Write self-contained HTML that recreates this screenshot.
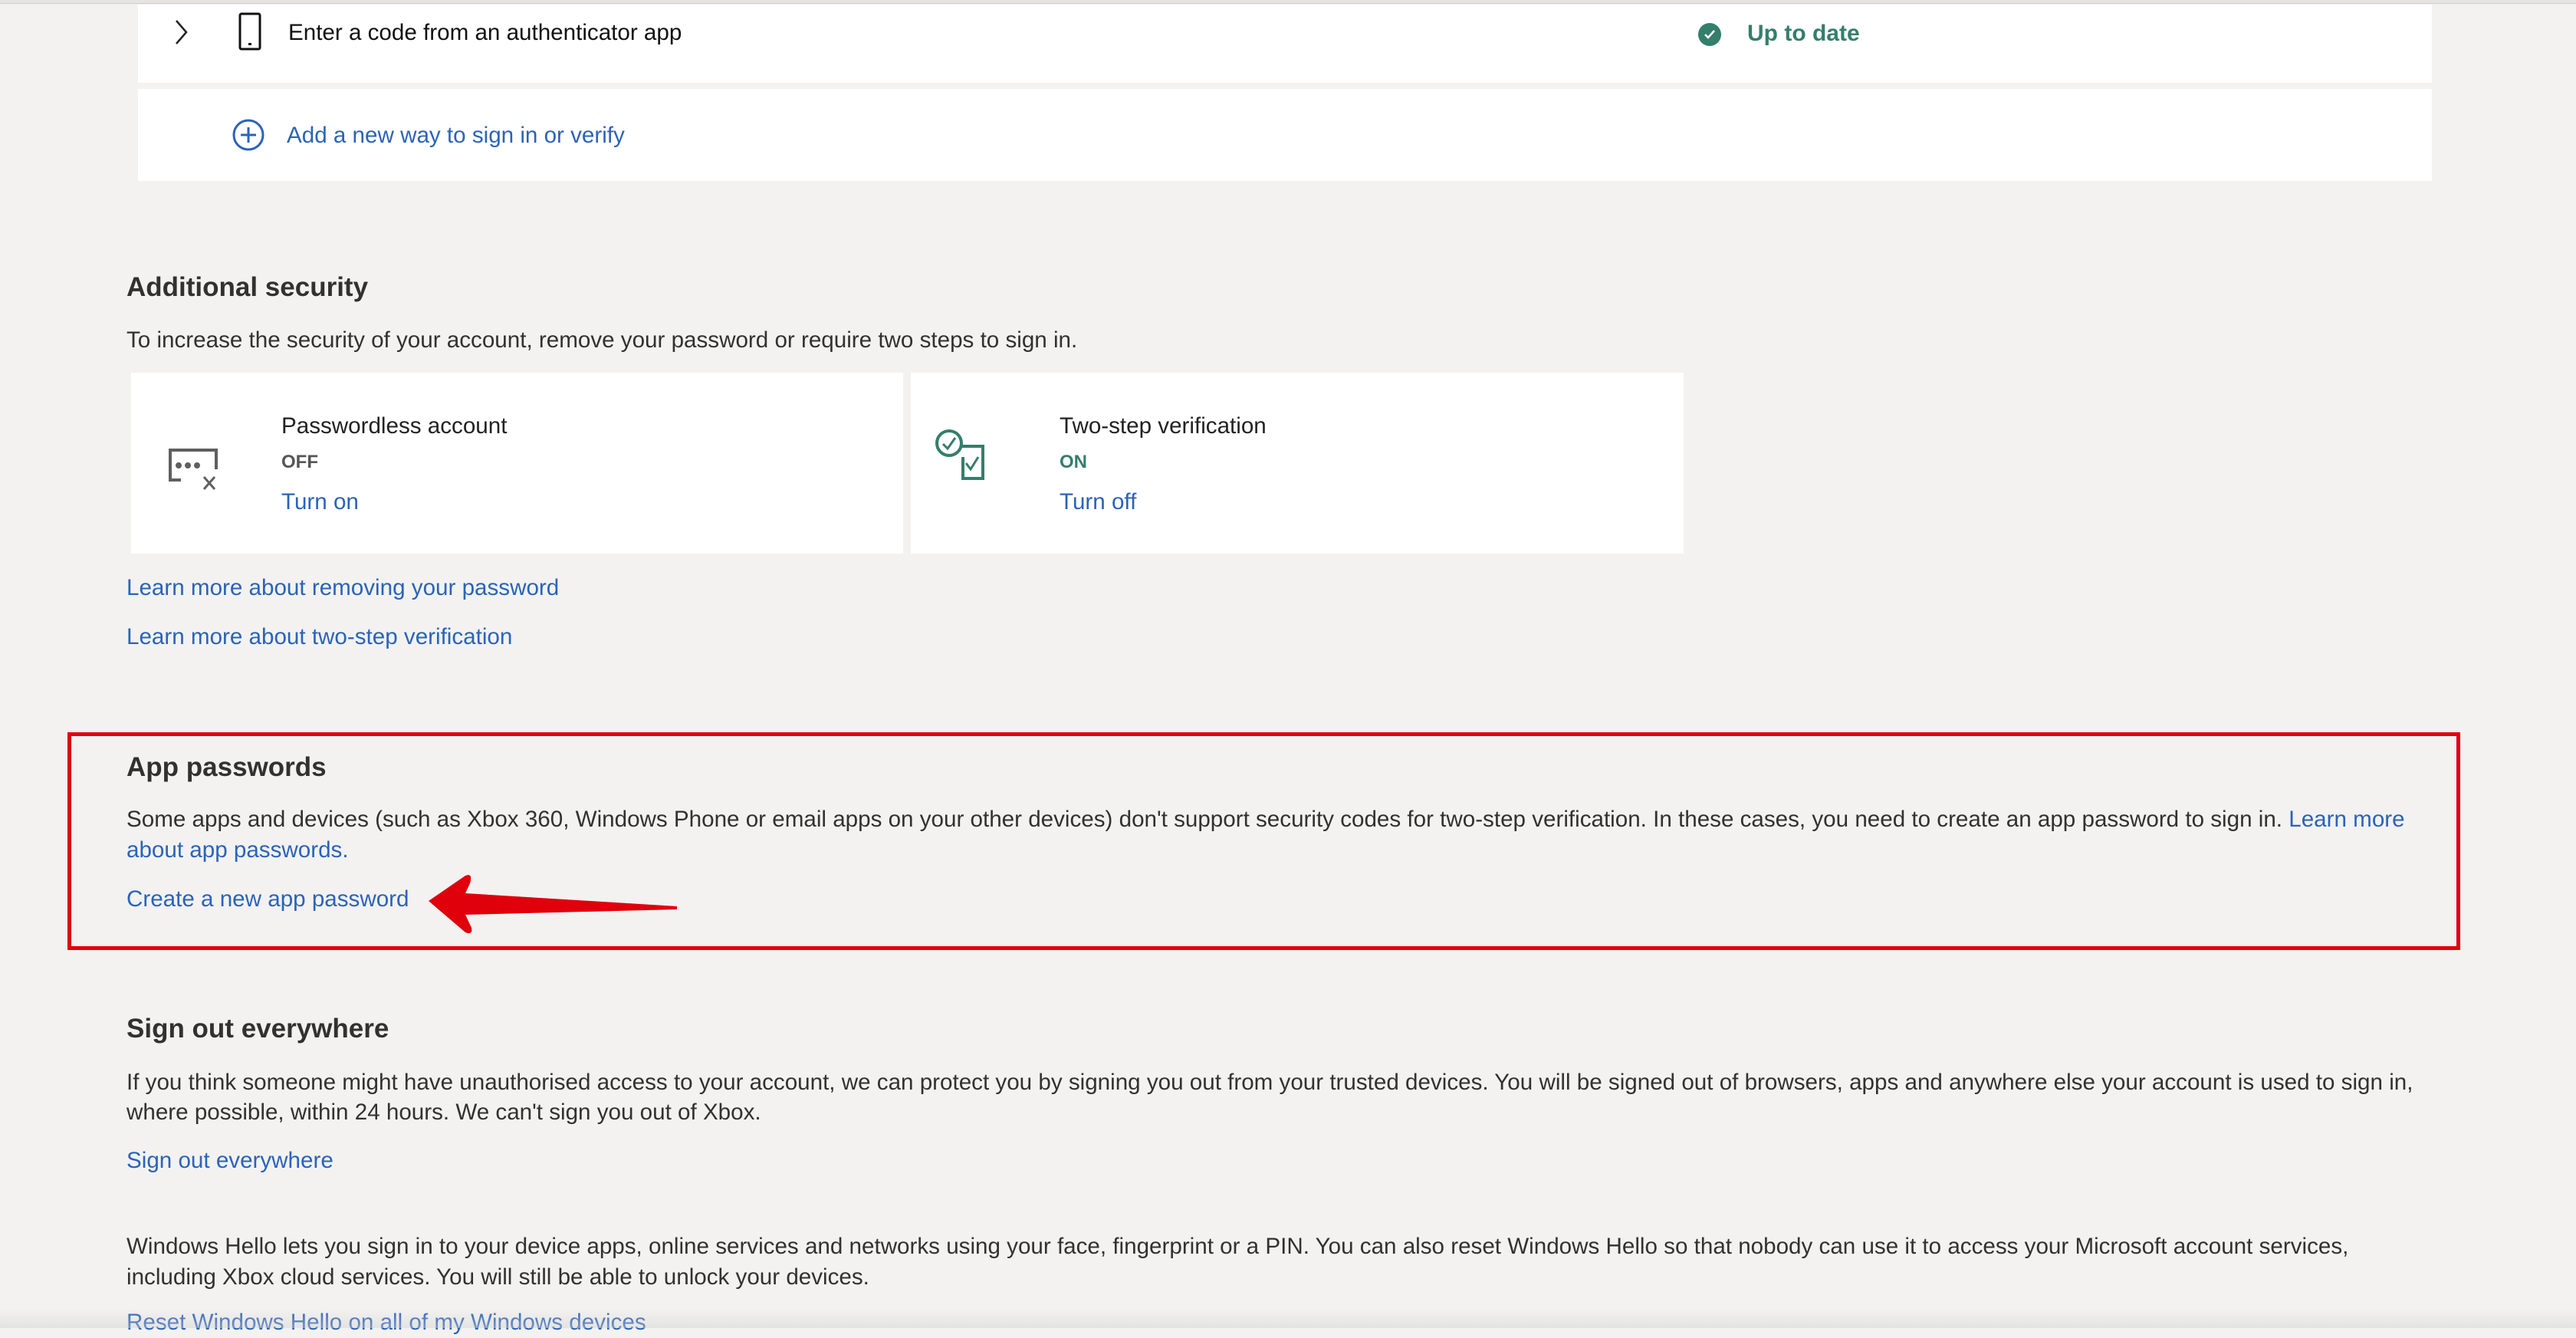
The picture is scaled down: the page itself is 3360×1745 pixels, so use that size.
<!DOCTYPE html>
<html><head><meta charset="utf-8"><style>
*{margin:0;padding:0;box-sizing:border-box}
body{width:3360px;height:1732px;background:#f3f2f1;position:relative;overflow:hidden;font-family:"Liberation Sans",sans-serif;color:#323130;font-size:29.6px}
.a{position:absolute;white-space:nowrap;line-height:40px}
.card{position:absolute;background:#fff}
.link{color:#2b63b8}
.h{font-weight:bold;font-size:35px;color:#323130}
</style></head><body>
<div style="position:absolute;left:0;top:0;width:3360px;height:5px;background:#e6e4e2;border-bottom:1px solid #d0cecc"></div>
<div class="card" style="left:180px;top:6px;width:2992px;height:102px"></div>
<div class="card" style="left:180px;top:116px;width:2992px;height:120px"></div>
<svg class="a" style="left:226px;top:24px" width="22" height="36" viewBox="0 0 22 36"><path d="M4 3 L17 18 L4 33" fill="none" stroke="#222" stroke-width="2.5"/></svg>
<svg class="a" style="left:310px;top:16px" width="34" height="52" viewBox="0 0 34 52"><rect x="3" y="2" width="26" height="46" rx="2" fill="none" stroke="#111" stroke-width="3"/><rect x="14" y="40" width="4" height="3" fill="#111"/></svg>
<div class="a" style="left:376px;top:23px;color:#111">Enter a code from an authenticator app</div>
<svg class="a" style="left:2214px;top:29px" width="32" height="32" viewBox="0 0 32 32"><circle cx="16" cy="16" r="15" fill="#347e6c"/><path d="M10 16 L14 20 L22 11" fill="none" stroke="#fff" stroke-width="2.5"/></svg>
<div class="a" style="left:2279px;top:24px;color:#347e6c;font-weight:bold;font-size:30px">Up to date</div>
<svg class="a" style="left:302px;top:154px" width="44" height="44" viewBox="0 0 44 44"><circle cx="22" cy="22" r="19" fill="none" stroke="#2b63b8" stroke-width="3"/><path d="M22 12 V32 M12 22 H32" stroke="#2b63b8" stroke-width="3"/></svg>
<div class="a link" style="left:374px;top:157px">Add a new way to sign in or verify</div>

<div class="a h" style="left:165px;top:355px">Additional security</div>
<div class="a" style="left:165px;top:424px">To increase the security of your account, remove your password or require two steps to sign in.</div>
<div class="card" style="left:171px;top:486px;width:1007px;height:236px"></div>
<div class="card" style="left:1188px;top:486px;width:1008px;height:236px"></div>
<svg class="a" style="left:218px;top:582px" width="70" height="62" viewBox="0 0 70 62"><path d="M40 5 H4 V44 H18 M64 30 V5 H40" fill="none" stroke="#5f5f5f" stroke-width="4"/><circle cx="15" cy="25" r="4" fill="#5f5f5f"/><circle cx="27" cy="25" r="4" fill="#5f5f5f"/><circle cx="39" cy="25" r="4" fill="#5f5f5f"/><path d="M48 40 L62 56 M62 40 L48 56" stroke="#5f5f5f" stroke-width="3"/></svg>
<div class="a" style="left:367px;top:536px;color:#222">Passwordless account</div>
<div class="a" style="left:367px;top:583px;font-weight:bold;font-size:24px;color:#555">OFF</div>
<div class="a link" style="left:367px;top:635px">Turn on</div>
<svg class="a" style="left:1218px;top:558px" width="70" height="72" viewBox="0 0 70 72"><circle cx="20" cy="20" r="16" fill="none" stroke="#347e6c" stroke-width="4"/><path d="M12 21 L18 27 L28 13" fill="none" stroke="#347e6c" stroke-width="3"/><path d="M36 24 H64 V66 H38 V38" fill="none" stroke="#347e6c" stroke-width="4"/><path d="M42 46 L48 54 L58 38" fill="none" stroke="#347e6c" stroke-width="3"/></svg>
<div class="a" style="left:1382px;top:536px;color:#222">Two-step verification</div>
<div class="a" style="left:1382px;top:583px;font-weight:bold;font-size:24px;color:#347e6c">ON</div>
<div class="a link" style="left:1382px;top:635px">Turn off</div>
<div class="a link" style="left:165px;top:747px">Learn more about removing your password</div>
<div class="a link" style="left:165px;top:811px">Learn more about two-step verification</div>

<div style="position:absolute;left:88px;top:955px;width:3121px;height:284px;border:5px solid #e0000b"></div>
<div class="a h" style="left:165px;top:981px">App passwords</div>
<div class="a" style="left:165px;top:1049px">Some apps and devices (such as Xbox 360, Windows Phone or email apps on your other devices) don't support security codes for two-step verification. In these cases, you need to create an app password to sign in. <span class="link">Learn more</span></div>
<div class="a link" style="left:165px;top:1089px">about app passwords.</div>
<div class="a link" style="left:165px;top:1153px">Create a new app password</div>
<svg class="a" style="left:555px;top:1138px" width="335" height="82" viewBox="0 0 335 82"><path d="M4 37 L52 4 Q62 0 58 14 L52 27 L328 44 L328 48 L52 55 L60 72 Q62 82 52 78 Z" fill="#e0000b"/></svg>

<div class="a h" style="left:165px;top:1322px">Sign out everywhere</div>
<div class="a" style="left:165px;top:1392px">If you think someone might have unauthorised access to your account, we can protect you by signing you out from your trusted devices. You will be signed out of browsers, apps and anywhere else your account is used to sign in,</div>
<div class="a" style="left:165px;top:1431px">where possible, within 24 hours. We can't sign you out of Xbox.</div>
<div class="a link" style="left:165px;top:1494px">Sign out everywhere</div>
<div class="a" style="left:165px;top:1606px">Windows Hello lets you sign in to your device apps, online services and networks using your face, fingerprint or a PIN. You can also reset Windows Hello so that nobody can use it to access your Microsoft account services,</div>
<div class="a" style="left:165px;top:1646px">including Xbox cloud services. You will still be able to unlock your devices.</div>
<div class="a link" style="left:165px;top:1705px">Reset Windows Hello on all of my Windows devices</div>
<div style="position:absolute;left:0;top:1706px;width:3360px;height:26px;background:linear-gradient(rgba(210,210,210,0),rgba(210,210,210,.45))"></div>
</body></html>
